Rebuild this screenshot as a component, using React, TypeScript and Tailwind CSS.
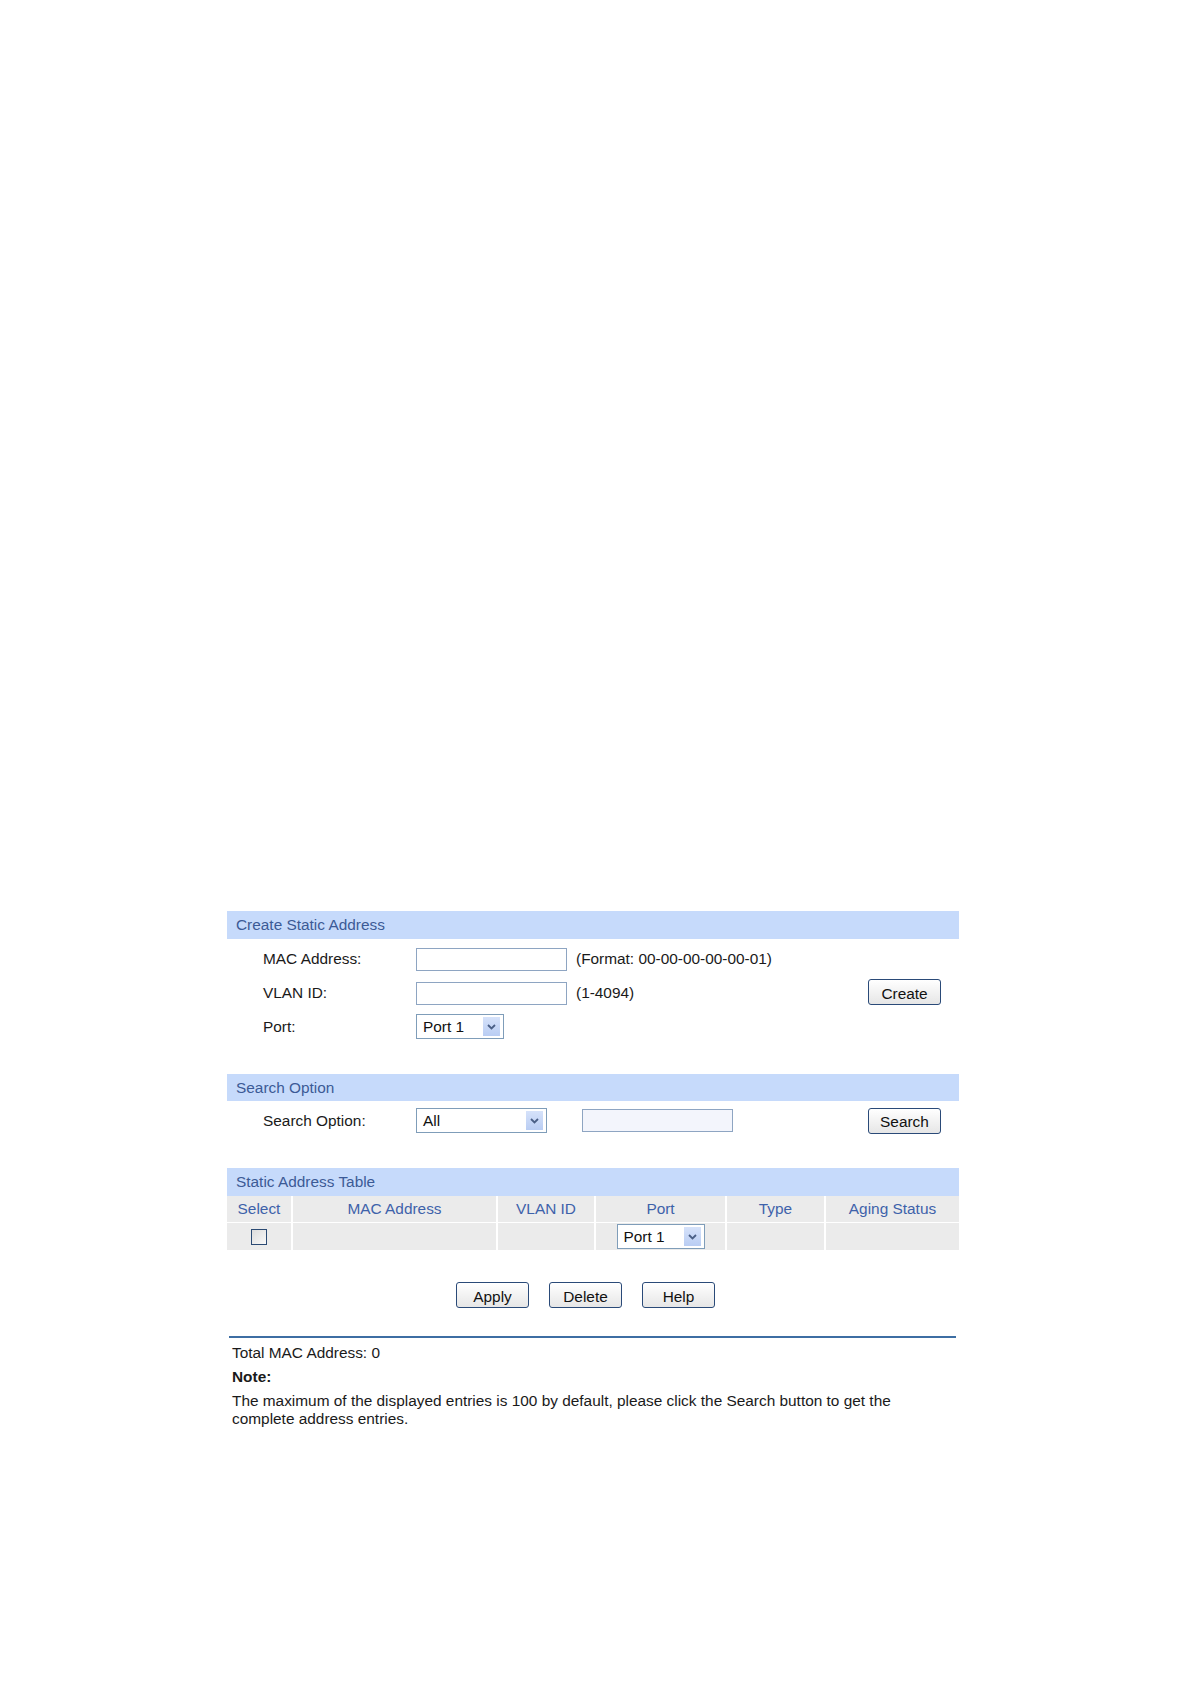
import React from 'react';

const font = { fontFamily: '"Liberation Sans", Arial, sans-serif' };

function Arrow() {
  return (
    <span className="flex h-[19px] w-[17px] items-center justify-center bg-gradient-to-b from-[#d6e2fa] to-[#b9cdf3]">
      <svg width="9" height="6" viewBox="0 0 9 6">
        <path d="M1 1 L4.5 4.5 L8 1" fill="none" stroke="#4a5f86" strokeWidth="1.8" />
      </svg>
    </span>
  );
}

function Select({ value, width }: { value: string; width: string }) {
  return (
    <div className={`flex h-[25px] items-center justify-between border border-[#7f9db9] bg-white pl-[6px] pr-[3px] ${width}`}>
      <span className="text-[15.4px] text-[#111]">{value}</span>
      <Arrow />
    </div>
  );
}

function Input({ tinted }: { tinted?: boolean }) {
  return (
    <div className={`h-[23px] w-[151px] border border-[#8ea5c2] ${tinted ? 'bg-[#f3f5fc]' : 'bg-white'}`} />
  );
}

function Button({ label }: { label: string }) {
  return (
    <button className="flex h-[26px] w-[73px] items-center justify-center rounded-[3px] border border-[#2a4a78] bg-gradient-to-b from-white to-[#e6e6e6] pt-[3px] text-[15.4px] text-[#111]">
      {label}
    </button>
  );
}

function SectionHeader({ title, h }: { title: string; h: string }) {
  return (
    <div className={`flex items-center bg-[#c6dafb] pl-[9px] text-[15.4px] text-[#3c5a96] ${h}`}>{title}</div>
  );
}

export default function App() {
  const cols = ['Select', 'MAC Address', 'VLAN ID', 'Port', 'Type', 'Aging Status'];

  return (
    <div className="min-h-[1684px] w-[1191px] bg-white" style={font}>
      <div className="ml-[227px] w-[732px] pt-[911px]">
        {/* Create Static Address */}
        <SectionHeader title="Create Static Address" h="h-[28px]" />
        <div className="pt-[3px] text-[15.4px] text-[#1a1a1a]">
          <div className="flex h-[34px] items-center pl-[36px]">
            <span className="w-[153px]">MAC Address:</span>
            <Input />
            <span className="ml-[9px]">(Format: 00-00-00-00-00-01)</span>
          </div>
          <div className="flex h-[34px] items-center pl-[36px] pr-[18px]">
            <span className="w-[153px]">VLAN ID:</span>
            <Input />
            <span className="ml-[9px]">(1-4094)</span>
            <div className="ml-auto mt-[-2px]">
              <Button label="Create" />
            </div>
          </div>
          <div className="flex h-[33px] items-center pl-[36px]">
            <span className="w-[153px]">Port:</span>
            <Select value="Port 1" width="w-[88px]" />
          </div>
        </div>

        {/* Search Option */}
        <div className="mt-[31px]">
          <SectionHeader title="Search Option" h="h-[27px]" />
          <div className="flex h-[39px] items-center pl-[36px] pr-[18px] text-[15.4px] text-[#1a1a1a]">
            <span className="w-[153px]">Search Option:</span>
            <Select value="All" width="w-[131px]" />
            <div className="ml-[35px]">
              <Input tinted />
            </div>
            <div className="ml-auto">
              <Button label="Search" />
            </div>
          </div>
        </div>

        {/* Static Address Table */}
        <div className="mt-[28px]">
          <SectionHeader title="Static Address Table" h="h-[28px]" />
          <div className="grid grid-cols-[64px_203px_96px_129px_97px_133px] gap-x-[2px] gap-y-[1px] text-[15.4px]">
            {cols.map((c) => (
              <div key={c} className="flex h-[26px] items-center justify-center bg-[#ebebeb] text-[#3e62aa]">
                {c}
              </div>
            ))}
            <div className="flex h-[27px] items-center justify-center bg-[#ebebeb]">
              <span className="h-[16px] w-[16px] border border-[#2b4a73] bg-gradient-to-br from-[#dcdcdc] to-[#f8f8f8]" />
            </div>
            <div className="bg-[#ebebeb]" />
            <div className="bg-[#ebebeb]" />
            <div className="flex h-[27px] items-center justify-center bg-[#ebebeb]">
              <Select value="Port 1" width="w-[88px]" />
            </div>
            <div className="bg-[#ebebeb]" />
            <div className="bg-[#ebebeb]" />
          </div>
        </div>

        {/* Buttons */}
        <div className="mt-[32px] flex gap-[20px] pl-[229px]">
          <Button label="Apply" />
          <Button label="Delete" />
          <Button label="Help" />
        </div>

        {/* Footer */}
        <div className="ml-[2px] mt-[28px] h-[2px] w-[727px] bg-[#3d6ea3]" />
        <div className="pl-[5px] text-[15.4px] text-[#1a1a1a]">
          <div className="mt-[5px] leading-[19px]">Total MAC Address: 0</div>
          <div className="mt-[5px] font-bold leading-[19px]">Note:</div>
          <p className="mt-[6px] max-w-[680px] leading-[18px]">
            The maximum of the displayed entries is 100 by default, please click the Search button to get the complete address entries.
          </p>
        </div>
      </div>
    </div>
  );
}
